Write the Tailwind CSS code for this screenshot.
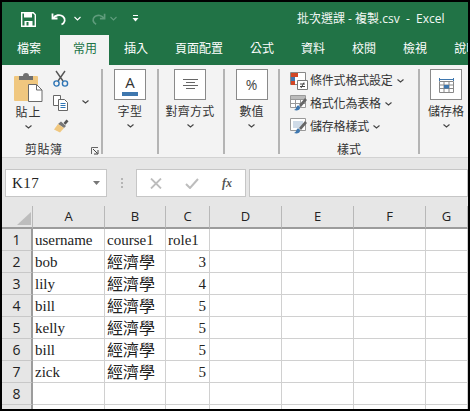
<!DOCTYPE html>
<html lang="zh-Hant">
<head>
  <meta charset="UTF-8">
  <title>批次選課 - 複製.csv - Excel</title>
  <script src="https://cdn.jsdelivr.net/npm/@tailwindcss/browser@4"></script>
</head>
<body class="w-[470px] h-[411px] overflow-hidden bg-black font-['Open_Sans','Noto_Sans_CJK_TC',sans-serif]">
  <div class="ml-[2px] mt-[2px] w-[466px] h-[407px] overflow-hidden bg-[#e6e6e6] flex flex-col">

    <!-- title bar -->
    <div class="h-[33px] shrink-0 bg-[#217346] flex items-center text-white relative">
      <svg class="ml-[19px] mt-[1px]" width="15" height="15" viewBox="0 0 15 15"><path d="M.7.7h11.6l2 2v11.6H.7z" fill="none" stroke="#fff" stroke-width="1.4"/><path d="M3 1h8v4.5H3zM3.5 9h8v5h-8z" fill="#fff"/><path d="M5.5 10h2v3.5h-2z" fill="#217346"/></svg>
      <svg class="ml-[15px]" width="16" height="14" viewBox="0 0 16 14"><path d="M1.5 1.5v5h5" fill="none" stroke="#fff" stroke-width="1.8"/><path d="M2 6.500C4 3 9 2 12 4.500s2 6.500-1.500 8" fill="none" stroke="#fff" stroke-width="1.8"/></svg>
      <svg class="ml-[7px]" width="7" height="5" viewBox="0 0 7 5"><path d="M.5 1l3 3 3-3" fill="none" stroke="#fff" stroke-width="1.1"/></svg>
      <svg class="ml-[10px]" width="15" height="14" viewBox="0 0 16 14"><path d="M14.500 1.500v5h-5" fill="none" stroke="#5f9c7c" stroke-width="1.8"/><path d="M14 6.500C12 3 7 2 4 4.500s-2 6.500 1.500 8" fill="none" stroke="#5f9c7c" stroke-width="1.8"/></svg>
      <svg class="ml-[4px]" width="7" height="5" viewBox="0 0 7 5"><path d="M.5 1l3 3 3-3" fill="none" stroke="#5f9c7c" stroke-width="1.1"/></svg>
      <svg class="ml-[15px]" width="7" height="7" viewBox="0 0 7 7"><path d="M1 .5h5" stroke="#fff"/><path d="M.5 3h6l-3 3.500z" fill="#fff"/></svg>
      <span class="ml-[158px] text-[12px] whitespace-pre text-[#f2f7f4]">批次選課 - 複製.csv  -  Excel</span>
    </div>

    <!-- tabs -->
    <div class="h-[30px] shrink-0 bg-[#217346] flex text-[12px] text-white whitespace-nowrap">
      <span class="pl-[15px] pr-[14px] leading-[28px]">檔案</span>
      <span class="ml-[5px] pl-[13px] pr-[12px] leading-[28px] bg-[#f3f3f3] text-[#217346]">常用</span>
      <span class="pl-[15px] pr-[13px] leading-[28px]">插入</span>
      <span class="pl-[14px] pr-[13px] leading-[28px]">頁面配置</span>
      <span class="pl-[14px] pr-[13px] leading-[28px]">公式</span>
      <span class="pl-[14px] pr-[13px] leading-[28px]">資料</span>
      <span class="pl-[14px] pr-[13px] leading-[28px]">校閱</span>
      <span class="pl-[14px] pr-[13px] leading-[28px]">檢視</span>
      <span class="pl-[14px] pr-[13px] leading-[28px]">說明</span>
    </div>

    <!-- ribbon -->
    <div class="h-[93px] shrink-0 bg-[#f3f3f3] border-b border-[#d2d2d2] flex pt-[4px] text-[12px] text-[#333]">

      <!-- clipboard -->
      <div class="w-[101px] h-[85px] shrink-0 border-r-2 border-[#b4b4b4] relative">
        <div class="flex h-[65px]">
          <div class="w-[48px] flex flex-col items-center pl-[5px]">
            <svg class="mt-[4px]" width="29" height="29" viewBox="0 0 29 29">
              <rect x="0" y="3" width="24" height="25" rx="1" fill="#f0c77f"/>
              <path d="M5 3h14v4H5z" fill="#6f6f6f"/>
              <circle cx="12" cy="3" r="3" fill="#6f6f6f"/>
              <path d="M14.500 11.500h8l5.500 5.500v11.500H14.500z" fill="#fff" stroke="#6a6a6a"/>
              <path d="M22.500 11.500v5.500h5.500" fill="none" stroke="#6a6a6a"/>
            </svg>
            <span class="leading-[14px] mt-[4px] text-[12px] tracking-[1px]">貼上</span>
            <svg class="mt-[5px]" width="7" height="4" viewBox="0 0 7 4"><path d="M.5.500l3 2.500 3-2.500" fill="none" stroke="#444" stroke-width="1.100"/></svg>
          </div>
          <div class="flex flex-col items-start pl-[3px]">
            <svg class="mt-[1px]" width="16" height="17" viewBox="0 0 16 17"><path d="M3 1l7 10M12 1l-7 10" stroke="#555" stroke-width="1.400" fill="none"/><circle cx="3.500" cy="13.500" r="2.600" fill="none" stroke="#2f75b5" stroke-width="1.400"/><circle cx="12" cy="13.500" r="2.600" fill="none" stroke="#2f75b5" stroke-width="1.400"/></svg>
            <div class="flex items-center mt-[8px]">
              <svg width="16" height="16" viewBox="0 0 16 16"><path d="M.5.500h7v10h-7z" fill="#fff" stroke="#666"/><path d="M5.500 4.500h6l3 3v8h-9z" fill="#fff" stroke="#666"/><path d="M7.500 8.500h5M7.500 10.500h5M7.500 12.500h5" stroke="#2f75b5"/></svg>
              <svg class="ml-[13px] -mt-[2px]" width="7" height="4" viewBox="0 0 7 4"><path d="M.5.500l3 2.500 3-2.500" fill="none" stroke="#444" stroke-width="1.100"/></svg>
            </div>
            <svg class="mt-[7px]" width="17" height="15" viewBox="0 0 17 15"><path d="M10.500 5l3-3.500 2 1.700-3 3.500z" fill="#555"/><path d="M8 3.500l5 4.500-2 2-6-4z" fill="#777"/><path d="M5 6l6 4-4 4.500L1 11.500z" fill="#f0c77f"/></svg>
          </div>
        </div>
        <div class="absolute left-[23px] top-[73px] leading-[16px] text-[12px] tracking-[.5px]">剪貼簿</div>
        <svg class="absolute left-[89px] top-[78px]" width="8" height="8" viewBox="0 0 8 8"><path d="M.5 7V.5H7" fill="none" stroke="#666"/><path d="M2 2l4.500 4.500M7 3v4H3" fill="none" stroke="#444"/></svg>
      </div>

      <!-- font -->
      <div class="w-[56px] h-[85px] shrink-0 border-r-2 border-[#b4b4b4] flex flex-col items-center">
        <div class="w-[32px] h-[31px] bg-white border border-[#8a8a8a] flex flex-col items-center">
          <span class="font-['Open_Sans',sans-serif] text-[15px] leading-[15px] mt-[5px] text-[#333]">A</span>
          <span class="w-[16px] h-[4px] mt-[2px] bg-[#3f77ae]"></span>
        </div>
        <span class="mt-[4px] leading-[16px] tracking-[.5px]">字型</span>
        <svg class="mt-[4px]" width="7" height="4" viewBox="0 0 7 4"><path d="M.5.500l3 2.500 3-2.500" fill="none" stroke="#444" stroke-width="1.100"/></svg>
      </div>

      <!-- alignment -->
      <div class="w-[66px] h-[85px] shrink-0 border-r-2 border-[#b4b4b4] flex flex-col items-center pr-[2px]">
        <div class="w-[32px] h-[31px] bg-white border border-[#8a8a8a] flex items-center justify-center">
          <svg width="15" height="11" viewBox="0 0 15 11"><path d="M0 .5h15M3 3.500h9M0 6.500h15M3 9.500h9" stroke="#666"/></svg>
        </div>
        <span class="mt-[4px] leading-[16px] tracking-[.2px]">對齊方式</span>
        <svg class="mt-[4px]" width="7" height="4" viewBox="0 0 7 4"><path d="M.5.500l3 2.500 3-2.500" fill="none" stroke="#444" stroke-width="1.100"/></svg>
      </div>

      <!-- number -->
      <div class="w-[55px] h-[85px] shrink-0 border-r-2 border-[#b4b4b4] flex flex-col items-center">
        <div class="w-[32px] h-[31px] bg-white border border-[#8a8a8a] flex items-center justify-center font-['Open_Sans',sans-serif] text-[14px] text-[#444]">%</div>
        <span class="mt-[4px] leading-[16px]">數值</span>
        <svg class="mt-[4px]" width="7" height="4" viewBox="0 0 7 4"><path d="M.5.500l3 2.500 3-2.500" fill="none" stroke="#444" stroke-width="1.100"/></svg>
      </div>

      <!-- styles -->
      <div class="w-[140px] h-[85px] shrink-0 border-r-2 border-[#b4b4b4] pl-[10px] relative">
        <div class="flex items-center h-[23px] mt-[0px]">
          <svg width="18" height="18" viewBox="0 0 18 18"><path d="M.5.500h15v12H.5z" fill="#fff" stroke="#888"/><path d="M1 1h7v4H1z" fill="#d24726"/><path d="M1 5h4v4H1z" fill="#3f77ae"/><path d="M1 9h4v4H1z" fill="#d24726"/><path d="M7.500 8.500h10v9h-10z" fill="#fff" stroke="#777"/><path d="M10 12h5M10 14.500h5M14 10.500l-3 5.500" stroke="#444" fill="none"/></svg>
          <span class="ml-[2px] tracking-[-.2px]">條件式格式設定</span>
          <svg class="ml-[4px]" width="7" height="4" viewBox="0 0 7 4"><path d="M.5.500l3 2.500 3-2.500" fill="none" stroke="#444" stroke-width="1.100"/></svg>
        </div>
        <div class="flex items-center h-[23px]">
          <svg width="18" height="18" viewBox="0 0 18 18"><path d="M.5.500h15v12H.5zM5.500.5v12M10.500.5v12M.5 4.500h15M.5 8.500h15" fill="#fff" stroke="#999"/><path d="M1 1h14v3H1z" fill="#bbb"/><path d="M15 3l2 2-6 7-2-2z" fill="#666"/><path d="M7 11c2-1 3 0 3 2s-3 3-6 2c2-1 2-2 3-4z" fill="#3f77ae"/></svg>
          <span class="ml-[2px] tracking-[-.2px]">格式化為表格</span>
          <svg class="ml-[4px]" width="7" height="4" viewBox="0 0 7 4"><path d="M.5.500l3 2.500 3-2.500" fill="none" stroke="#444" stroke-width="1.100"/></svg>
        </div>
        <div class="flex items-center h-[23px]">
          <svg width="18" height="18" viewBox="0 0 18 18"><path d="M.5.500h15v12H.5z" fill="#fff" stroke="#999"/><path d="M3 3h10v7H3z" fill="#cfdbe8"/><path d="M15 3l2 2-6 7-2-2z" fill="#666"/><path d="M7 11c2-1 3 0 3 2s-3 3-6 2c2-1 2-2 3-4z" fill="#3f77ae"/></svg>
          <span class="ml-[2px] tracking-[-.2px]">儲存格樣式</span>
          <svg class="ml-[4px]" width="7" height="4" viewBox="0 0 7 4"><path d="M.5.500l3 2.500 3-2.500" fill="none" stroke="#444" stroke-width="1.100"/></svg>
        </div>
        <div class="absolute left-[57px] top-[73px] leading-[16px]">樣式</div>
      </div>

      <!-- cells -->
      <div class="w-[48px] h-[85px] shrink-0 flex flex-col items-center pl-[4px]">
        <div class="w-[32px] h-[31px] shrink-0 bg-white border border-[#8a8a8a] flex items-center justify-center">
          <svg width="15" height="16" viewBox="0 0 15 16"><path d="M.5 1v3M14.500 1v3M1 2.500h13" stroke="#3f77ae" fill="none"/><path d="M.5 4.500h14v11H.5zM.5 8h14M.5 11.500h14M5 4.500v11M10 4.500v11" fill="#fff" stroke="#888"/><path d="M5 8h5v3.500H5z" fill="#3f77ae"/></svg>
        </div>
        <span class="mt-[4px] leading-[16px] whitespace-nowrap">儲存格</span>
        <svg class="mt-[4px]" width="7" height="4" viewBox="0 0 7 4"><path d="M.5.500l3 2.500 3-2.500" fill="none" stroke="#444" stroke-width="1.100"/></svg>
      </div>
    </div>

    <!-- formula bar -->
    <div class="h-[48px] shrink-0 flex items-start pt-[11px] pl-[3px]">
      <div class="w-[102px] h-[28px] bg-white border border-[#c6c6c6] flex items-center pl-[6px] pr-[6px] justify-between">
        <span class="font-['Liberation_Serif',serif] text-[15px] tracking-[.5px] text-[#222]">K17</span>
        <svg width="7" height="4" viewBox="0 0 7 4"><path d="M0 0h7L3.500 4z" fill="#777"/></svg>
      </div>
      <div class="w-[29px] h-[28px] flex flex-col items-center justify-center gap-[2px]">
        <span class="w-[2px] h-[2px] bg-[#b5b5b5]"></span><span class="w-[2px] h-[2px] bg-[#b5b5b5]"></span><span class="w-[2px] h-[2px] bg-[#b5b5b5]"></span>
      </div>
      <div class="w-[110px] h-[28px] bg-white border border-[#c6c6c6] flex items-center">
        <svg class="ml-[13px]" width="12" height="11" viewBox="0 0 12 11"><path d="M1 .5l10 10M11 .5l-10 10" stroke="#bdbdbd" stroke-width="1.800"/></svg>
        <svg class="ml-[23px]" width="14" height="11" viewBox="0 0 14 11"><path d="M1 6l4 4 8-9" fill="none" stroke="#bdbdbd" stroke-width="2"/></svg>
        <span class="ml-[23px] font-['Liberation_Serif',serif] italic font-bold text-[12px] text-[#555]">fx</span>
      </div>
      <div class="ml-[3px] flex-1 h-[28px] bg-white border border-[#c6c6c6]"></div>
    </div>

    <!-- sheet -->
    <div id="sheet" class="grid grid-cols-[31px_72px_61px_44px_72px_72px_72px_42px] grid-rows-[23px] auto-rows-[22px] bg-white overflow-hidden flex-1 text-[#222] font-['Liberation_Serif','Noto_Sans_CJK_TC',serif]"></div>
  </div>

  <script>
    const sheet = document.getElementById('sheet');
    const rows = [
      ['username', 'course1', 'role1'],
      ['bob', '經濟學', 3],
      ['lily', '經濟學', 4],
      ['bill', '經濟學', 5],
      ['kelly', '經濟學', 5],
      ['bill', '經濟學', 5],
      ['zick', '經濟學', 5],
      []
    ];
    const colHead = "bg-[#e6e6e6] border-b-2 border-r border-b-[#9c9c9c] border-r-[#b8b8b8] flex items-center justify-center text-[13px] text-[#222] font-['Open_Sans',sans-serif]";
    const rowHead = "bg-[#e6e6e6] border-b border-r-2 border-b-[#c8c8c8] border-r-[#9c9c9c] flex items-center justify-center text-[14px] text-[#222] font-['Open_Sans',sans-serif]";
    const cell = 'border-b border-r border-[#d0d0d0] pl-[2px] pr-[3px] leading-[23px] whitespace-nowrap overflow-hidden';

    let html = `<div class="${colHead}"><svg class="ml-[13px] mt-[4px]" width="14" height="13" viewBox="0 0 14 13"><path d="M14 0v13H0z" fill="#bdbdbd"/></svg></div>`;
    'ABCDEFG'.split('').forEach(c => { html += `<div class="${colHead}">${c}</div>`; });
    rows.forEach((row, r) => {
      html += `<div class="${rowHead}">${r + 1}</div>`;
      for (let c = 0; c < 7; c++) {
        const v = row[c] === undefined ? '' : row[c];
        // the CJK column runs a little larger than the latin text
        const size = c === 1 && r > 0 ? ' text-[16px]' : ' text-[15px]';
        html += `<div class="${cell}${size}${typeof v === 'number' ? ' text-right' : ''}">${v}</div>`;
      }
    });
    // row 9 is cut off by the window, so only its empty cells show
    html += `<div class="${rowHead}"></div>`;
    for (let c = 0; c < 7; c++) html += `<div class="${cell}"></div>`;
    sheet.innerHTML = html;
  </script>
</body>
</html>
